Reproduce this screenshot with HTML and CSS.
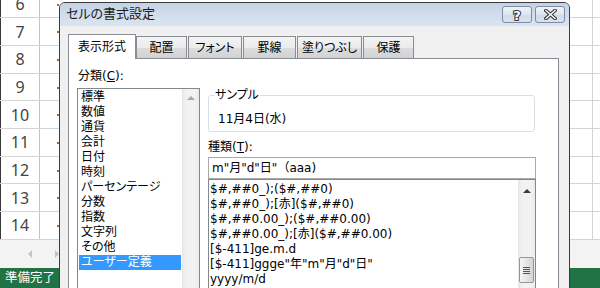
FILE: index.html
```html
<!DOCTYPE html>
<html lang="ja">
<head>
<meta charset="utf-8">
<title>セルの書式設定</title>
<link rel="stylesheet" href="styles.css">
</head>
<body>
<div class="screen">
  <div class="sheet">
    <div class="rows">
      <div class="rows-inner">
        <div class="row"><div class="rh">6</div><div class="ca"></div><div class="cb"></div><div class="cd"></div></div>
        <div class="row"><div class="rh">7</div><div class="ca"></div><div class="cb"></div><div class="cd"></div></div>
        <div class="row"><div class="rh">8</div><div class="ca"></div><div class="cb"></div><div class="cd"></div></div>
        <div class="row"><div class="rh">9</div><div class="ca"></div><div class="cb"></div><div class="cd"></div></div>
        <div class="row"><div class="rh">10</div><div class="ca"></div><div class="cb"></div><div class="cd"></div></div>
        <div class="row"><div class="rh">11</div><div class="ca"></div><div class="cb"></div><div class="cd"></div></div>
        <div class="row"><div class="rh">12</div><div class="ca"></div><div class="cb"></div><div class="cd"></div></div>
        <div class="row"><div class="rh">13</div><div class="ca"></div><div class="cb"></div><div class="cd"></div></div>
        <div class="row"><div class="rh">14</div><div class="ca"></div><div class="cb"></div><div class="cd"></div></div>
      </div>
    </div>
    <div class="hscroll"><span class="harr-l"></span><span class="harr-r"></span></div>
    <div class="status">準備完了</div>
  </div>

  <div class="dialog">
    <div class="titlebar">
      <div class="title">セルの書式設定</div>
      <div class="tbtns">
        <div class="tbtn">
          <svg width="12" height="14" viewBox="0 0 12 14"><text x="6" y="12" text-anchor="middle" class="qmark">?</text></svg>
        </div>
        <div class="tbtn">
          <svg width="13" height="11" viewBox="0 0 13 11">
            <path d="M2 1.5 L11 9.5 M11 1.5 L2 9.5" stroke="#3a3a3a" stroke-width="3.6" stroke-linecap="square" fill="none"/>
            <path d="M2 1.5 L11 9.5 M11 1.5 L2 9.5" stroke="#ffffff" stroke-width="1.4" stroke-linecap="square" fill="none"/>
          </svg>
        </div>
      </div>
    </div>
    <div class="dbody">
      <div class="tabs">
        <div class="tab sel">表示形式</div>
        <div class="tab w1">配置</div>
        <div class="tab w2">フォント</div>
        <div class="tab w3">罫線</div>
        <div class="tab w4">塗りつぶし</div>
        <div class="tab w5">保護</div>
      </div>
      <div class="panel">
        <div class="lcol">
          <div class="lbl">分類(<u>C</u>):</div>
          <div class="clist">
            <div class="items">
              <div class="item">標準</div>
              <div class="item">数値</div>
              <div class="item">通貨</div>
              <div class="item">会計</div>
              <div class="item">日付</div>
              <div class="item">時刻</div>
              <div class="item">パーセンテージ</div>
              <div class="item">分数</div>
              <div class="item">指数</div>
              <div class="item">文字列</div>
              <div class="item">その他</div>
              <div class="item sel">ユーザー定義</div>
            </div>
            <div class="vscroll"><span class="up dis"></span></div>
          </div>
        </div>
        <div class="rcol">
          <fieldset class="sample">
            <legend>サンプル</legend>
            <div class="stext">11月4日(水)</div>
          </fieldset>
          <div class="lbl2">種類(<u>T</u>):</div>
          <div class="inp">m"月"d"日"<span class="fw">（</span>aaa)</div>
          <div class="flist">
            <div class="fitems">
              <div class="fitem">$#,##0_);($#,##0)</div>
              <div class="fitem">$#,##0_);[赤]($#,##0)</div>
              <div class="fitem">$#,##0.00_);($#,##0.00)</div>
              <div class="fitem">$#,##0.00_);[赤]($#,##0.00)</div>
              <div class="fitem">[$-411]ge.m.d</div>
              <div class="fitem">[$-411]ggge"年"m"月"d"日"</div>
              <div class="fitem">yyyy/m/d</div>
            </div>
            <div class="vscroll fs"><span class="up"></span><span class="thumb"></span></div>
          </div>
        </div>
      </div>
    </div>
  </div>
</div>
</body>
</html>
```

FILE: styles.css
```css
* { box-sizing: border-box; }
body { margin: 0; }

.screen {
  position: relative;
  width: 600px;
  height: 288px;
  overflow: hidden;
  background: #ffffff;
  font-family: "DejaVu Sans", "Noto Sans CJK JP", sans-serif;
  font-feature-settings: "palt";
  font-size: 12px;
  color: #000;
}

/* spreadsheet behind */
.sheet { display: flex; flex-direction: column; height: 288px; }
.rows { height: 240px; overflow: hidden; flex: none; }
.rows-inner { margin-top: -9.4px; }
.row { display: flex; height: 27.7px; border-bottom: 1px solid #d4d4d4; }
.rh {
  width: 40px; flex: none;
  border-left: 1px solid #3a3a3a;
  border-right: 1px solid #c2c2c2;
  display: flex; align-items: center; justify-content: center;
  font-family: "Noto Sans", sans-serif;
  font-size: 16px;
  color: #444;
}
.ca {
  width: 19px; flex: none;
  background: linear-gradient(#b5672a, #b5672a) no-repeat right 13px / 2px 2px;
}
.cb { width: 534px; flex: none; border-right: 1px solid #d4d4d4; }
.cd { flex: 1; }

.hscroll {
  height: 28px; flex: none;
  background: #f3f3f3;
  display: flex; align-items: center;
}
.harr-l {
  margin-left: 28px;
  width: 0; height: 0;
  border-top: 4px solid transparent;
  border-bottom: 4px solid transparent;
  border-right: 4px solid #c4c4c4;
}
.harr-r {
  margin-left: 23px;
  width: 0; height: 0;
  border-top: 4px solid transparent;
  border-bottom: 4px solid transparent;
  border-left: 4px solid #c4c4c4;
}
.status {
  height: 20px; flex: none;
  background: #217346;
  color: #fff;
  padding-left: 5px;
  line-height: 20px;
  font-size: 12.5px;
}

/* dialog */
.dialog {
  position: absolute;
  left: 59px; top: 2px;
  width: 511px; height: 300px;
  border: 1px solid #3c3c3c;
  border-radius: 6px 6px 0 0;
  background: #f0f0f0;
  overflow: hidden;
  display: flex; flex-direction: column;
}
.titlebar {
  height: 23px; flex: none;
  display: flex; align-items: flex-start;
  background: linear-gradient(#c3d2e5, #d3dfed 60%, #dbe5f1);
}
.title {
  margin: 3px 0 0 6px;
  font-size: 13px;
  line-height: 16px;
  color: #1b1b1b;
}
.tbtns { margin: 3px 4px 0 auto; display: flex; gap: 3px; }
.tbtn {
  width: 30px; height: 17px;
  border: 1px solid #7b8ca4;
  border-radius: 3px;
  background: linear-gradient(#eef3f9, #dde6f1 50%, #cfdbea 51%, #d9e3ef);
  display: flex; align-items: center; justify-content: center;
}
.qmark {
  font-family: "DejaVu Sans", sans-serif;
  font-weight: bold;
  font-size: 13px;
  fill: #ffffff;
  stroke: #3a3a3a;
  stroke-width: 2.2px;
  paint-order: stroke;
}

.dbody { flex: 1; padding: 8px 0 0 8px; }
.tabs { display: flex; align-items: flex-end; gap: 1px; height: 24px; }
.tab {
  height: 22px;
  border: 1px solid #898c95;
  border-bottom: none;
  background: linear-gradient(#f3f3f3, #ebebeb 50%, #dddddd 50%, #d2d2d2);
  display: flex; align-items: center; justify-content: center;
  line-height: 16px;
}
.tab.sel {
  width: 68px; height: 25px;
  margin-bottom: -1px; margin-right: -1px;
  background: #fff;
  position: relative; z-index: 1;
}
.w1 { width: 51px; }
.w2 { width: 54px; }
.w3 { width: 53px; }
.w4 { width: 65px; }
.w5 { width: 51px; }

.panel {
  width: 491px; height: 240px;
  background: #fff;
  border: 1px solid #898c95;
  padding: 9px 0 0 8px;
  display: flex; gap: 8px;
}
.lcol { width: 123px; flex: none; }
.lbl { line-height: 16px; padding-left: 1px; }
.clist {
  margin-top: 4px;
  height: 220px;
  border: 1px solid #828790;
  display: flex;
}
.items { flex: 1; padding: 1px 1px 0 1px; }
.item { height: 15px; line-height: 15px; padding-left: 2px; white-space: nowrap; }
.item.sel { background: #3399ff; color: #fff; }

.vscroll {
  width: 17px; flex: none;
  background: linear-gradient(to right, #e6e6e6, #f2f2f2 25%, #f2f2f2 75%, #ebebeb);
  display: flex; flex-direction: column; align-items: center;
}
.up {
  margin-top: 7px;
  width: 0; height: 0;
  border-left: 4px solid transparent;
  border-right: 4px solid transparent;
  border-bottom: 4px solid #3c3c3c;
}
.up.dis { border-bottom-color: #a8a8a8; }
.fs .up { margin-top: 9px; }
.thumb {
  margin-top: 64px;
  width: 15px; height: 26px;
  border: 1px solid #979797;
  border-radius: 2px;
  background:
    repeating-linear-gradient(#555 0 1px, transparent 1px 2px) no-repeat center / 7px 7px,
    linear-gradient(to right, #f6f6f6, #e6e6e6 50%, #d4d4d4);
}

.rcol { width: 328px; flex: none; margin-top: 19px; display: flex; flex-direction: column; }
.sample {
  margin: 0;
  width: 327px;
  padding: 8px 0 4px 5px;
  border: 1px solid #d5dfe5;
  border-radius: 3px;
  min-inline-size: 0;
}
.sample legend { padding: 0 1px; line-height: 16px; }
.stext { padding-left: 4px; line-height: 16px; }
.lbl2 { margin-top: 7px; line-height: 16px; }
.inp {
  margin-top: 2px;
  height: 22px;
  border: 1px solid #a9a9a9;
  padding-left: 3px;
  line-height: 20px;
  white-space: nowrap;
}
.fw { font-feature-settings: normal; }
.flist {
  height: 120px;
  border: 1px solid #828790;
  display: flex;
}
.fitems { flex: 1; padding: 2px 0 0 1px; }
.fitem { height: 15px; line-height: 15px; white-space: nowrap; }
```
